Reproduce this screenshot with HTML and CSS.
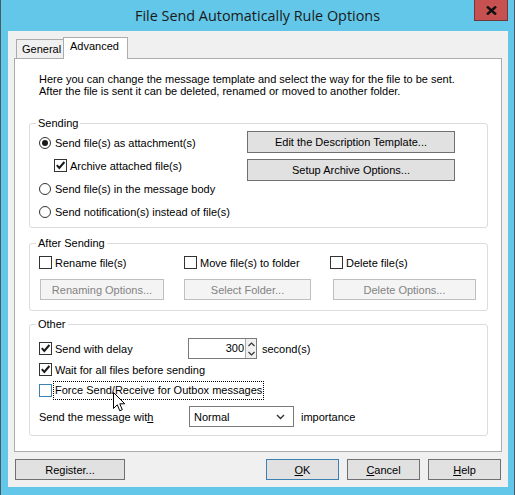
FILE: index.html
```html
<!DOCTYPE html>
<html lang="en">
<head>
  <meta charset="UTF-8">
  <title>File Send Automatically Rule Options</title>
  <link rel="stylesheet" href="styles.css">
</head>
<body>
<div class="window">
  <div class="titlebar">
    <span class="title">File Send Automatically Rule Options</span>
    <span class="close">
      <svg width="11" height="9" viewBox="0 0 11 9"><path d="M1 0.5 L10 8.5 M10 0.5 L1 8.5" stroke="#111" stroke-width="2.4"/></svg>
    </span>
  </div>

  <div class="client">
    <div class="tabs">
      <div class="tab">General</div>
      <div class="tab active">Advanced</div>
    </div>

    <div class="panel">
      <p class="intro">Here you can change the message template and select the way for the file to be sent.<br>After the file is sent it can be deleted, renamed or moved to another folder.</p>

      <div class="group sending">
        <span class="group-title">Sending</span>
        <div class="sending-body">
          <div class="options">
            <div class="row"><span class="radio checked"></span>Send file(s) as attachment(s)</div>
            <div class="row sub"><span class="check"><svg width="11" height="11" viewBox="0 0 11 11"><path d="M1.8 5.2 L4.3 8 L9.4 2" fill="none" stroke="#1a1a1a" stroke-width="2"/></svg></span>Archive attached file(s)</div>
            <div class="row"><span class="radio"></span>Send file(s) in the message body</div>
            <div class="row"><span class="radio"></span>Send notification(s) instead of file(s)</div>
          </div>
          <div class="side-buttons">
            <span class="btn">Edit the Description Template...</span>
            <span class="btn">Setup Archive Options...</span>
          </div>
        </div>
      </div>

      <div class="group after">
        <span class="group-title">After Sending</span>
        <div class="after-body">
          <div class="row"><span class="check"></span>Rename file(s)</div>
          <div class="row"><span class="check"></span>Move file(s) to folder</div>
          <div class="row"><span class="check"></span>Delete file(s)</div>
          <span class="btn disabled rename-btn">Renaming Options...</span>
          <span class="btn disabled folder-btn">Select Folder...</span>
          <span class="btn disabled delete-btn">Delete Options...</span>
        </div>
      </div>

      <div class="group other">
        <span class="group-title">Other</span>
        <div class="row delay-row">
          <span class="delay-label"><span class="check"><svg width="11" height="11" viewBox="0 0 11 11"><path d="M1.8 5.2 L4.3 8 L9.4 2" fill="none" stroke="#1a1a1a" stroke-width="2"/></svg></span>Send with delay</span>
          <span class="spinner">
            <span class="spin-value">300</span>
            <span class="spin-arrows">
              <svg width="9" height="18" viewBox="0 0 9 18"><path d="M1.5 6 L4.5 3 L7.5 6 M1.5 12 L4.5 15 L7.5 12" fill="none" stroke="#333" stroke-width="1.2"/></svg>
            </span>
          </span>
          <span class="unit">second(s)</span>
        </div>
        <div class="row"><span class="check"><svg width="11" height="11" viewBox="0 0 11 11"><path d="M1.8 5.2 L4.3 8 L9.4 2" fill="none" stroke="#1a1a1a" stroke-width="2"/></svg></span>Wait for all files before sending</div>
        <div class="row"><span class="check hover"></span><span class="focus">Force Send/Receive for Outbox messages</span></div>
        <div class="row importance-row">
          <span class="importance-label">Send the message wit<u>h</u></span>
          <span class="dropdown">Normal<svg width="9" height="6" viewBox="0 0 9 6"><path d="M1 1 L4.5 4.5 L8 1" fill="none" stroke="#333" stroke-width="1.4"/></svg></span>
          <span class="unit2">importance</span>
        </div>
      </div>
    </div>

    <div class="footer">
      <span class="btn register">Register...</span>
      <span class="spacer"></span>
      <span class="btn small default"><u>O</u>K</span>
      <span class="btn small"><u>C</u>ancel</span>
      <span class="btn small"><u>H</u>elp</span>
    </div>
  </div>

  <svg class="cursor" width="13" height="21" viewBox="0 0 13 21"><path d="M0.5 0.5 L0.5 16.5 L4.3 12.8 L6.8 18.8 L9.3 17.7 L6.8 11.8 L11.8 11.8 Z" fill="#fff" stroke="#000" stroke-width="1"/></svg>
</div>
</body>
</html>
```

FILE: styles.css
```css
* { box-sizing: border-box; }
body { margin: 0; font-family: "Liberation Sans", Arial, sans-serif; font-size: 11px; color: #000; }

.window { position: relative; width: 515px; height: 495px; background: #62c7e9; border-left: 1px solid #4a5a62; border-right: 1px solid #4a5a62; display: flex; flex-direction: column; }
.titlebar { position: relative; height: 31px; display: flex; justify-content: center; align-items: center; padding-bottom: 1px; }
.title { font-family: "Open Sans", sans-serif; font-size: 14.4px; color: #1a1a1a; }
.close { position: absolute; top: 0; right: 6px; width: 34px; height: 21px; background: #c75050; border: 1px solid #6b3a3a; border-top: none; display: flex; align-items: center; justify-content: center; }

.client { margin: 0 6px 8px 7px; flex: 1; background: #f0f0f0; padding: 6px 6px 0 6px; display: flex; flex-direction: column; }

.tabs { display: flex; align-items: flex-end; height: 21px; padding-left: 2px; }
.tab { height: 19px; padding: 0 5px; border: 1px solid #acacac; border-bottom: none; background: #f0f0f0; line-height: 18px; width: 48px; }
.tab.active { height: 22px; margin-bottom: -1px; margin-left: -1px; width: 65px; background: #fff; padding: 0 6px; line-height: 17px; position: relative; z-index: 1; }

.panel { height: 394px; border: 1px solid #acacac; background: #fff; padding: 14px 13px 0 14px; }
.intro { margin: 0 0 0 10px; line-height: 12px; }

.group { border: 1px solid #dcdcdc; border-radius: 3px; padding: 0 0 0 9px; }
.group-title { display: block; width: max-content; background: #fff; padding: 0 2px; margin: -7px 0 0 -3px; line-height: 13px; height: 13px; }

.row { display: flex; align-items: center; height: 21px; white-space: nowrap; }
.check { width: 13px; height: 13px; border: 1px solid #333; background: #fff; margin-right: 3px; display: inline-flex; align-items: center; justify-content: center; flex: none; }
.check.hover { border-color: #3c7fb1; }
.radio { width: 12px; height: 12px; border: 1px solid #333; border-radius: 50%; background: #fff; margin-right: 4px; display: inline-flex; align-items: center; justify-content: center; flex: none; }
.radio.checked::after { content: ""; width: 6px; height: 6px; border-radius: 50%; background: #1a1a1a; }

.btn { display: flex; align-items: center; justify-content: center; height: 22px; background: #e1e1e1; border: 1px solid #707070; white-space: nowrap; }
.btn.disabled { background: #f4f4f4; border-color: #bfbfbf; color: #838383; height: 21px; }

.sending { margin-top: 26px; padding-right: 32px; padding-bottom: 4px; }
.sending-body { display: grid; grid-template-columns: 1fr 208px; margin-top: 1px; }
.options .row { height: 23px; }
.options .row.sub { padding-left: 15px; }
.side-buttons { display: flex; flex-direction: column; gap: 6px; }

.after { margin-top: 15px; padding-bottom: 10px; }
.after-body { display: grid; grid-template-columns: 145px 146px 1fr; grid-template-rows: 21px 21px; row-gap: 6px; margin-top: 2px; }
.rename-btn { margin-left: 1px; width: 124px; }
.folder-btn { width: 127px; }
.delete-btn { margin-left: 3px; width: 143px; }

.other { margin-top: 13px; padding-bottom: 8px; }
.other .delay-row { margin-top: 7px; }
.delay-label { display: flex; align-items: center; width: 149px; }
.spinner { display: flex; width: 69px; height: 21px; border: 1px solid #7a7a7a; background: #fff; }
.spin-value { flex: 1; text-align: right; line-height: 19px; padding-right: 1px; }
.spin-arrows { width: 11px; border-left: 1px solid #acacac; display: flex; align-items: center; justify-content: center; background: #f0f0f0; }
.unit { margin-left: 5px; }
.focus { outline: 1px dotted #000; padding: 0 1px; margin-left: -1px; line-height: 17px; }
.importance-row { margin-top: 5px; }
.importance-label { width: 150px; }
.dropdown { width: 105px; height: 21px; border: 1px solid #7a7a7a; background: #fff; display: flex; align-items: center; justify-content: space-between; padding: 0 8px 0 4px; }
.unit2 { margin-left: 7px; }

.footer { display: flex; margin-top: 7px; padding: 0 1px 0 1px; gap: 8px; }
.footer .btn { height: 21px; }
.register { width: 110px; }
.spacer { flex: 1; }
.small { width: 73px; }
.default { border-color: #3c7fb1; }

.cursor { position: absolute; left: 112px; top: 392px; }
```
